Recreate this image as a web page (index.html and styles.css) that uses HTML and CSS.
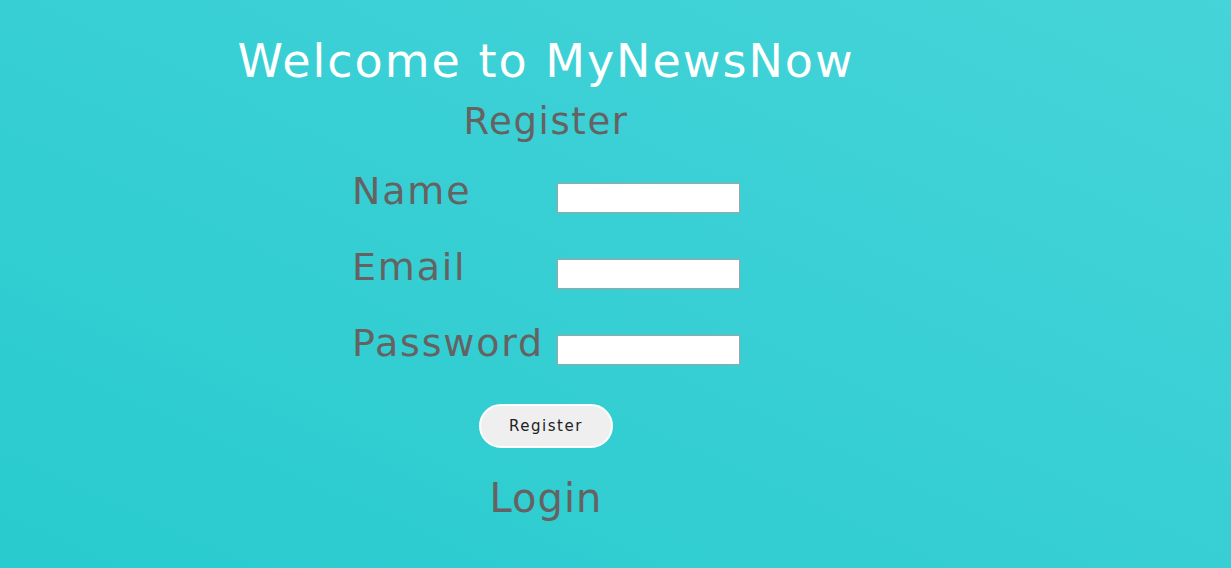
FILE: index.html
```html
<!DOCTYPE html>
<html lang="en">
<head>
<meta charset="utf-8">
<title>MyNewsNow - Register</title>
<link rel="stylesheet" href="styles.css">
</head>
<body>
<main class="page">
  <h1 class="title">Welcome to MyNewsNow</h1>
  <h2 class="subtitle">Register</h2>
  <form class="form">
    <div class="row">
      <label class="label" for="name">Name</label>
      <input class="field" id="name" type="text">
    </div>
    <div class="row">
      <label class="label" for="email">Email</label>
      <input class="field" id="email" type="email">
    </div>
    <div class="row">
      <label class="label" for="password">Password</label>
      <input class="field" id="password" type="password">
    </div>
    <button class="btn" type="button">Register</button>
  </form>
  <a class="login" href="#">Login</a>
</main>
</body>
</html>
```
FILE: styles.css
```css
html, body {
  margin: 0;
  padding: 0;
  height: 100%;
}
body {
  background: linear-gradient(to top right, #28cbce 0%, #37cfd4 50%, #45d4d8 100%);
  font-family: "DejaVu Sans", "Liberation Sans", sans-serif;
  overflow: hidden;
}
.page {
  width: 1092px;
  display: flex;
  flex-direction: column;
  align-items: center;
}
.title {
  margin: 33px 0 0;
  font-size: 46px;
  line-height: 56px;
  font-weight: normal;
  letter-spacing: 2px;
  color: #ffffff;
}
.subtitle {
  margin: 11px 0 0;
  font-size: 37px;
  line-height: 44px;
  font-weight: normal;
  letter-spacing: 1.6px;
  color: #666262;
}
.form {
  margin: 24px 0 0;
  display: flex;
  flex-direction: column;
  align-items: center;
  gap: 30px;
}
.row {
  display: flex;
  align-items: flex-start;
  gap: 5px;
}
.label {
  width: 200px;
  font-size: 38px;
  line-height: 46px;
  letter-spacing: 1.8px;
  color: #666262;
}
.field {
  margin-top: 15px;
  width: 183px;
  height: 30px;
  box-sizing: border-box;
  border: 1px solid #a3a3a3;
  background: #ffffff;
  padding: 2px 4px;
}
.btn {
  margin-top: 8px;
  width: 134px;
  height: 44px;
  box-sizing: border-box;
  border: 2px solid #ffffff;
  border-radius: 22px;
  background: #efefef;
  color: #222222;
  font-family: "DejaVu Sans", "Liberation Sans", sans-serif;
  font-size: 15px;
  letter-spacing: 1.5px;
  cursor: pointer;
}
.login {
  margin-top: 26px;
  font-size: 40px;
  line-height: 48px;
  letter-spacing: 1px;
  color: #666262;
  text-decoration: none;
}
```
